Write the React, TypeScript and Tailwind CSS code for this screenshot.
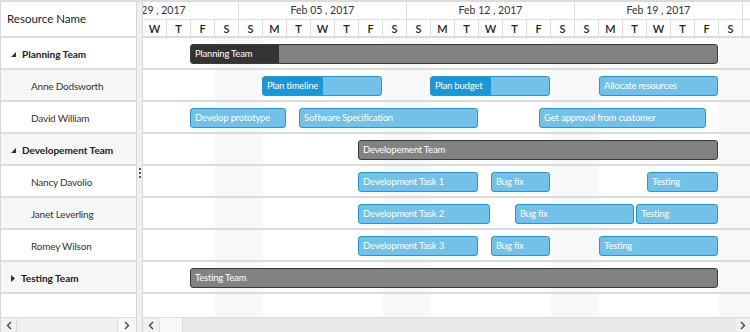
import React from 'react';

type Bar = { x1: number; x2: number; label: string; prog?: number };
type Row = { name: string; group?: 'open' | 'closed'; summary?: Bar; bars?: Bar[] };

const CHART_X = 144;

const rows: Row[] = [
  { name: 'Planning Team', group: 'open', summary: { x1: 191, x2: 719, label: 'Planning Team', prog: 279 } },
  {
    name: 'Anne Dodsworth',
    bars: [
      { x1: 263, x2: 383, label: 'Plan timeline', prog: 323 },
      { x1: 431, x2: 551, label: 'Plan budget', prog: 491 },
      { x1: 600, x2: 719, label: 'Allocate resources' },
    ],
  },
  {
    name: 'David William',
    bars: [
      { x1: 191, x2: 287, label: 'Develop prototype' },
      { x1: 300, x2: 479, label: 'Software Specification' },
      { x1: 540, x2: 707, label: 'Get approval from customer' },
    ],
  },
  { name: 'Developement Team', group: 'open', summary: { x1: 359, x2: 719, label: 'Developement Team' } },
  {
    name: 'Nancy Davolio',
    bars: [
      { x1: 359, x2: 479, label: 'Development Task 1' },
      { x1: 492, x2: 551, label: 'Bug fix' },
      { x1: 648, x2: 719, label: 'Testing' },
    ],
  },
  {
    name: 'Janet Leverling',
    bars: [
      { x1: 359, x2: 491, label: 'Development Task 2' },
      { x1: 516, x2: 635, label: 'Bug fix' },
      { x1: 637, x2: 719, label: 'Testing' },
    ],
  },
  {
    name: 'Romey Wilson',
    bars: [
      { x1: 359, x2: 479, label: 'Development Task 3' },
      { x1: 492, x2: 551, label: 'Bug fix' },
      { x1: 600, x2: 719, label: 'Testing' },
    ],
  },
  { name: 'Testing Team', group: 'closed', summary: { x1: 191, x2: 719, label: 'Testing Team' } },
];

const letters = ['S', 'M', 'T', 'W', 'T', 'F', 'S'];
const days = Array.from({ length: 35 }, (_, i) => ({ letter: letters[i % 7], weekend: i % 7 === 0 || i % 7 === 6 }));
const weeks = ['Jan 29 , 2017', 'Feb 05 , 2017', 'Feb 12 , 2017', 'Feb 19 , 2017', 'Feb 26 , 2017'];

function Caret({ open }: { open: boolean }) {
  return open ? (
    <svg width="5" height="5" viewBox="0 0 5 5" className="shrink-0">
      <polygon points="5,0 5,5 0,5" fill="#333" />
    </svg>
  ) : (
    <svg width="4" height="7" viewBox="0 0 4 7" className="shrink-0">
      <polygon points="0,0 4,3.5 0,7" fill="#333" />
    </svg>
  );
}

function TaskBar({ bar }: { bar: Bar }) {
  const w = bar.x2 - bar.x1;
  const p = bar.prog ? bar.prog - bar.x1 : 0;
  return (
    <div
      className="absolute top-[6px] h-[20px] rounded-[3px] border border-[#1d9bd8] bg-[#72c1e8] overflow-hidden"
      style={{ left: bar.x1 - CHART_X, width: w }}
    >
      {p > 0 && <div className="absolute left-0 top-0 bottom-0 bg-[#1a97d5]" style={{ width: p }} />}
      <span className="relative block pl-[4px] text-[9.5px] tracking-[-0.2px] leading-[18px] text-white whitespace-nowrap">
        {bar.label}
      </span>
    </div>
  );
}

function SummaryBar({ bar }: { bar: Bar }) {
  const w = bar.x2 - bar.x1;
  const p = bar.prog ? bar.prog - bar.x1 : 0;
  return (
    <div
      className="absolute top-[6px] h-[20px] rounded-[3px] border border-[#3a3a3a] bg-[#828282] overflow-hidden"
      style={{ left: bar.x1 - CHART_X, width: w }}
    >
      {p > 0 && <div className="absolute left-0 top-0 bottom-0 bg-[#333333]" style={{ width: p }} />}
      <span className="relative block pl-[4px] text-[9.5px] tracking-[-0.2px] leading-[18px] text-white whitespace-nowrap">
        {bar.label}
      </span>
    </div>
  );
}

function ScrollArrow({ dir }: { dir: 'l' | 'r' }) {
  return (
    <svg width="6" height="9" viewBox="0 0 6 9">
      <polyline
        points={dir === 'l' ? '5,1 1.5,4.5 5,8' : '1,1 4.5,4.5 1,8'}
        fill="none"
        stroke="#444"
        strokeWidth="1.4"
      />
    </svg>
  );
}

export default function App() {
  return (
    <div className="w-[750px] h-[332px] flex bg-white border-t-2 border-[#dcdcdc] font-['Lato','Open_Sans',sans-serif] text-[#333] overflow-hidden">
      {/* left grid */}
      <div className="w-[137px] shrink-0 flex flex-col border-l border-r border-[#d6d6d6]">
        <div className="h-[36px] shrink-0 flex items-center pl-[6px] text-[11.5px] text-[#222] border-b-2 border-[#dcdcdc]">
          Resource Name
        </div>
        {rows.map((r, i) => (
          <div
            key={r.name}
            className={`h-[32px] shrink-0 flex items-center border-b-2 border-[#dcdcdc] ${i % 2 === 1 ? 'bg-[#f7f7f7]' : 'bg-white'}`}
          >
            {r.group ? (
              <div className="flex items-center gap-[6px] pl-[10px] pt-[2px]">
                <Caret open={r.group === 'open'} />
                <span className="text-[10px] font-bold text-[#222]">{r.name}</span>
              </div>
            ) : (
              <span className="pl-[30px] pt-[2px] text-[10px] tracking-[-0.2px] text-[#333]">{r.name}</span>
            )}
          </div>
        ))}
        <div className="flex-1" />
        <div className="h-[15px] shrink-0 flex items-center bg-[#f0f0f0] border-t border-[#dcdcdc]">
          <div className="w-[16px] h-full flex items-center justify-center border-r border-[#dcdcdc]">
            <ScrollArrow dir="l" />
          </div>
          <div className="flex-1" />
          <div className="w-[19px] h-full flex items-center justify-center border-l border-[#dcdcdc] bg-[#f7f7f7]">
            <ScrollArrow dir="r" />
          </div>
        </div>
      </div>

      {/* splitter */}
      <div className="w-[6px] shrink-0 bg-[#efefef] border-r border-[#d6d6d6] flex items-start justify-center pt-[166px]">
        <div className="flex flex-col gap-[2px]">
          <span className="w-[2px] h-[2px] bg-[#555]" />
          <span className="w-[2px] h-[2px] bg-[#555]" />
          <span className="w-[2px] h-[2px] bg-[#555]" />
        </div>
      </div>

      {/* chart */}
      <div className="flex-1 min-w-0 flex flex-col overflow-hidden">
        <div className="h-[36px] shrink-0 overflow-hidden border-b-2 border-[#dcdcdc]">
          <div className="ml-[-72px] w-[840px]">
            <div className="h-[18px] flex border-b border-[#dcdcdc]">
              {weeks.map((w) => (
                <div key={w} className="w-[168px] shrink-0 border-r border-[#dcdcdc] text-center text-[10.5px] leading-[17px] text-[#333]">
                  {w}
                </div>
              ))}
            </div>
            <div className="h-[17px] flex">
              {days.map((d, i) => (
                <div key={i} className="w-[24px] shrink-0 border-r border-[#dcdcdc] text-center text-[11px] font-semibold leading-[17px] text-[#222]">
                  {d.letter}
                </div>
              ))}
            </div>
          </div>
        </div>

        <div className="relative flex-1 overflow-hidden">
          {/* weekend shading */}
          <div className="absolute inset-0 flex ml-[-72px]">
            {days.map((d, i) => (
              <div key={i} className={`w-[24px] shrink-0 ${d.weekend ? 'bg-[#f8f8f8]' : ''}`} />
            ))}
          </div>
          <div className="relative">
            {rows.map((r) => (
              <div key={r.name} className="relative h-[32px] border-b-2 border-[#dcdcdc]">
                {r.summary && <SummaryBar bar={r.summary} />}
                {r.bars?.map((b) => <TaskBar key={b.label + b.x1} bar={b} />)}
              </div>
            ))}
          </div>
        </div>

        <div className="h-[15px] shrink-0 flex items-center bg-[#e9e9e9] border-t border-[#dcdcdc]">
          <div className="w-[16px] h-full flex items-center justify-center bg-[#f0f0f0]">
            <ScrollArrow dir="l" />
          </div>
          <div className="w-[24px] h-full bg-[#f8f8f8] border-x border-[#dcdcdc]" />
          <div className="flex-1" />
          <div className="w-[14px] h-full flex items-center justify-center bg-[#f0f0f0]">
            <ScrollArrow dir="r" />
          </div>
        </div>
      </div>
    </div>
  );
}
